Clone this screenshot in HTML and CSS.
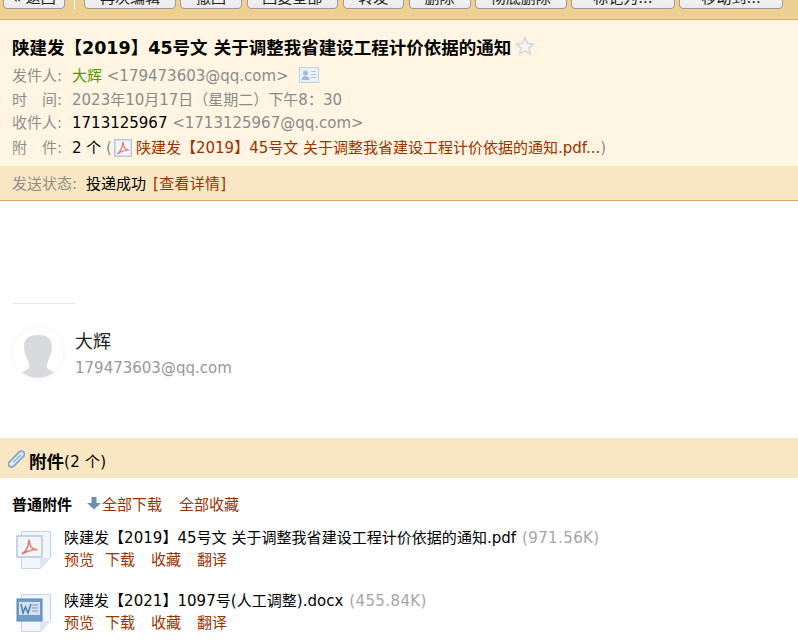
FILE: index.html
```html
<!DOCTYPE html>
<html lang="zh-CN">
<head>
  <meta charset="UTF-8">
  <title>陕建发【2019】45号文 关于调整我省建设工程计价依据的通知</title>
  <link rel="stylesheet" href="styles.css">
</head>
<body>
  <!-- 顶部工具栏，按钮上半截被窗口裁掉 -->
  <div class="toolbar">
    <button class="btn btn-back">« 返回</button>
    <span class="sep"></span>
    <button class="btn btn-wide">再次编辑</button>
    <button class="btn">撤回</button>
    <button class="btn btn-wide">回复全部</button>
    <button class="btn">转发</button>
    <button class="btn">删除</button>
    <button class="btn btn-wide">彻底删除</button>
    <button class="btn btn-more">标记为...</button>
    <button class="btn btn-more">移动到...</button>
  </div>

  <div class="head">
    <h1 class="subject">陕建发【2019】45号文 关于调整我省建设工程计价依据的通知<svg class="star" width="20" height="20" viewBox="0 0 22 22"><path d="M11 2l2.700 6.200 6.800.6-5.100 4.500 1.500 6.600L11 16.400l-5.900 3.500 1.500-6.600L1.500 8.800l6.800-.6z" fill="#f6f5f2" stroke="#d3d6da" stroke-width="1.600"/></svg></h1>
    <div class="meta-row"><span class="label">发件人:</span><span class="sender">大辉</span> <span class="gray">&lt;179473603@qq.com&gt;</span><svg class="card-icon" width="20" height="16" viewBox="0 0 20 16"><rect x=".5" y=".5" width="19" height="15" fill="#eaf1f8" stroke="#bcd2e6"/><circle cx="6.500" cy="6" r="2.500" fill="#9dbcd8"/><path d="M2.500 13c0-3 2-4 4-4s4 1 4 4z" fill="#9dbcd8"/><path d="M12 4.500h5M12 7.500h5M12 10.500h5" stroke="#a9c4dc"/></svg></div>
    <div class="meta-row"><span class="label">时<i class="gap"></i>间:</span><span class="gray">2023年10月17日（星期二）下午8：30</span></div>
    <div class="meta-row"><span class="label">收件人:</span>1713125967 <span class="gray">&lt;1713125967@qq.com&gt;</span></div>
    <div class="meta-row meta-last"><span class="label">附<i class="gap"></i>件:</span>2 个 <span class="gray">(</span><svg class="pdf-small" width="18" height="18" viewBox="0 0 18 18"><rect x=".75" y=".75" width="16.500" height="16.500" fill="#f3f5fa" stroke="#b9c7e2" stroke-width="1.500"/><path d="M3 15c2-1 4-4 5-7 .5-2 .5-5 1-5s.5 3 1 5c1 2 3 3 5 3-3 0-7 1-12 4z" fill="none" stroke="#df7a76" stroke-width="1.200"/></svg><a class="link" href="#">陕建发【2019】45号文 关于调整我省建设工程计价依据的通知.pdf...</a><span class="gray">)</span></div>
  </div>
  <div class="status">
    <span class="label label-status">发送状态:</span><span>投递成功</span><a class="link detail" href="#">[查看详情]</a>
  </div>

  <div class="body">
    <div class="rule"></div>
    <div class="signature">
      <div class="avatar">
        <svg width="50" height="50" viewBox="0 0 50 50"><path d="M25 7c8 0 14 3 14 11 0 6-2 11-4 15-1 2-2 5-1 7 1 1 5 3 8 5v5H8v-5c3-2 7-4 8-5 1-2 0-5-1-7-2-4-4-9-4-15 0-8 6-11 14-11z" fill="#d9dadd"/></svg>
      </div>
      <div class="sig-text">
        <div class="sig-name">大辉</div>
        <div class="sig-mail">179473603@qq.com</div>
      </div>
    </div>
  </div>

  <div class="attach-head">
    <svg class="clip" width="17" height="18" viewBox="0 0 17 18"><g transform="rotate(45 8.500 9)"><rect x="5.500" y="-1" width="6" height="20" rx="3" fill="#e4edf6" stroke="#7fa6cf" stroke-width="1.800"/><path d="M8.500 3v11" stroke="#8fb1d4" stroke-width="1.200"/></g></svg>
    <b class="attach-title">附件</b><span class="attach-count">(2 个)</span>
  </div>

  <div class="attach-bar">
    <b>普通附件</b>
    <svg class="down" width="14" height="14" viewBox="0 0 14 14"><path d="M4.500 1h5v6h4.500l-7 6.500L0 7h4.500z" fill="#6d8fb5"/></svg>
    <a class="link" href="#">全部下载</a>
    <a class="link all-save" href="#">全部收藏</a>
  </div>

  <div class="file">
    <svg class="file-icon" width="37" height="38" viewBox="0 0 37 38"><path d="M5.500 .5h29v26l-10 11h-19z" fill="#f2f6fc" stroke="#c3d5ea"/><path d="M34 27l-10 10v-10z" fill="#dbe6f3"/><rect x="1" y="5" width="25" height="21" fill="#f5f5f7" stroke="#b3c6e0" stroke-width="1.500"/><path d="M6 23c3-2 5-5 6-8 .5-2 .5-6 1-6s.5 4 1.500 6c1 2 3 3.500 7 3.500-4 0-9 1-15.500 4.500z" fill="none" stroke="#df7a76" stroke-width="1.500"/></svg>
    <div>
      <div class="file-name">陕建发【2019】45号文 关于调整我省建设工程计价依据的通知.pdf <span class="size">(971.56K)</span></div>
      <div class="file-ops"><a class="link op-first" href="#">预览</a><a class="link" href="#">下载</a><a class="link" href="#">收藏</a><a class="link" href="#">翻译</a></div>
    </div>
  </div>
  <div class="file">
    <svg class="file-icon" width="37" height="38" viewBox="0 0 37 38"><path d="M5.500 .5h29v26l-10 11h-19z" fill="#f2f6fc" stroke="#c3d5ea"/><path d="M34 27l-10 10v-10z" fill="#dbe6f3"/><rect x="1" y="5" width="25" height="22" fill="#6f9cc8" stroke="#5a86b4"/><rect x="3" y="8" width="21" height="13" fill="#d5e3f1"/><path d="M5 10l2 9 2.500-6 2.500 6 3-9" fill="none" stroke="#4f7dad" stroke-width="1.500"/><path d="M16 11h6M16 14h6M16 17h6" stroke="#6f9cc8"/></svg>
    <div>
      <div class="file-name">陕建发【2021】1097号(人工调整).docx <span class="size">(455.84K)</span></div>
      <div class="file-ops"><a class="link op-first" href="#">预览</a><a class="link" href="#">下载</a><a class="link" href="#">收藏</a><a class="link" href="#">翻译</a></div>
    </div>
  </div>
</body>
</html>
```

FILE: styles.css
```css
* {
  margin: 0;
  padding: 0;
  box-sizing: border-box;
}

html, body {
  height: 644px;
  overflow: hidden;
}

body {
  font-family: "DejaVu Sans", "Noto Sans CJK SC", sans-serif;
  font-size: 15px;
  color: #000;
  background: #fff;
}

a {
  text-decoration: none;
}

.link {
  color: #993300;
}

.gray {
  color: #8a8a8a;
}

/* 工具栏 */
.toolbar {
  height: 20px;
  padding: 0 0 10px 3px;
  display: flex;
  align-items: flex-end;
  overflow: hidden;
  background: #efd093;
  border-bottom: 1px solid #d2a873;
}

.btn {
  flex: none;
  width: 61.750px;
  height: 26px;
  margin-right: 4.500px;
  font: 15px "DejaVu Sans", "Noto Sans CJK SC", sans-serif;
  color: #222;
  background: linear-gradient(#fdfdfd, #ebebeb);
  border: 1px solid #9c9c9c;
  border-radius: 4px;
}

.btn-wide {
  width: 91.500px;
}

.btn-more {
  width: 103.750px;
}

.sep {
  flex: none;
  width: 1px;
  height: 16px;
  margin: 0 9px 0 5px;
  background: #fff;
}

/* 信头 */
.head {
  height: 146px;
  padding: 12px 12px 0;
  background: #fff5e2;
}

.subject {
  display: flex;
  align-items: center;
  height: 28px;
  margin-bottom: 5px;
  font-size: 17.500px;
  font-weight: bold;
  white-space: nowrap;
}

.star {
  margin-left: 4px;
}

.meta-row {
  height: 23.500px;
  line-height: 23.500px;
  white-space: pre;
}

.meta-last {
  padding-top: 1px;
}

.label {
  display: inline-block;
  width: 60px;
  color: #8f8f8f;
}

.gap {
  display: inline-block;
  width: 15px;
}

.sender {
  color: #4f9a00;
}

.card-icon {
  margin-left: 10px;
  vertical-align: -2px;
}

.pdf-small {
  margin: 0 4px 0 2px;
  vertical-align: -4px;
}

.status {
  display: flex;
  align-items: center;
  height: 35px;
  padding: 0 12px 2px;
  white-space: pre;
  background: #f9e6c2;
  border-bottom: 1px solid #d9a56a;
}

.label-status {
  width: 74px;
}

.detail {
  margin-left: 7px;
  letter-spacing: 0.3px;
}

/* 正文 */
.body {
  height: 237px;
  padding: 102px 13px 0;
}

.rule {
  width: 62px;
  height: 1px;
  background: #e6e6e6;
}

.signature {
  display: flex;
  align-items: flex-start;
  gap: 12px;
  margin-top: 24px;
}

.avatar {
  width: 50px;
  height: 50px;
  overflow: hidden;
  border-radius: 50%;
  background: #fff;
  box-shadow: 0 0 6px rgba(0, 0, 0, 0.05);
}

.sig-text {
  padding-top: 1px;
}

.sig-name {
  font-size: 18px;
  line-height: 26px;
  color: #222;
}

.sig-mail {
  font-size: 15px;
  line-height: 26px;
  color: #999;
}

/* 附件 */
.attach-head {
  display: flex;
  align-items: center;
  height: 40px;
  padding: 4px 0 0 8px;
  font-size: 15px;
  background: #f9e6c2;
}

.clip {
  margin-top: -2px;
}

.attach-title {
  margin-left: 4px;
  font-size: 17.500px;
}

.attach-count {
  letter-spacing: 0.3px;
}

.attach-bar {
  display: flex;
  align-items: center;
  height: 20px;
  margin: 15px 0 12px;
  padding-left: 12px;
}

.attach-bar b {
  font-weight: bold;
  margin-right: 15px;
}

.down {
  margin-right: 1px;
}

.all-save {
  margin-left: 17px;
}

.file {
  display: flex;
  align-items: flex-start;
  gap: 11px;
  height: 63px;
  padding-left: 16px;
}

.file-icon {
  margin-top: 6px;
  flex: none;
}

.file-name {
  margin-top: 1px;
  line-height: 24px;
  white-space: nowrap;
  letter-spacing: 0.03px;
}

.size {
  margin-left: 1px;
  letter-spacing: 0.4px;
  color: #a5a5a5;
}

.file-ops {
  display: flex;
  gap: 16px;
  line-height: 20px;
}

.op-first {
  margin-right: -5px;
}
```
